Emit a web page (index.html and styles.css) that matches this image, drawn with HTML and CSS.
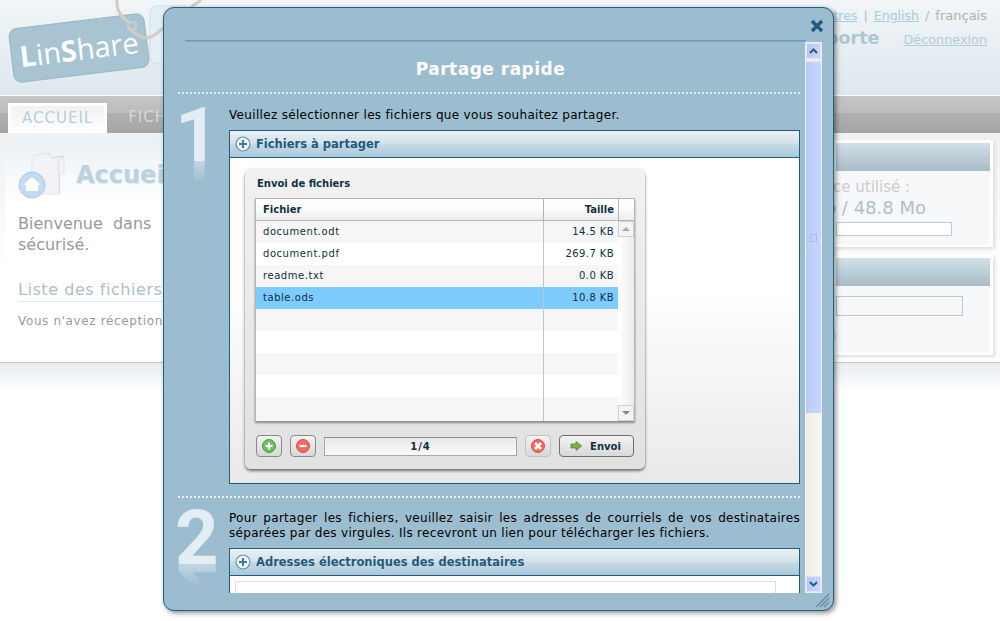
FILE: index.html
```html
<!DOCTYPE html>
<html lang="fr">
<head>
    <meta charset="utf-8" />
    <title>LinShare - Partage rapide</title>
    <link rel="stylesheet" href="styles.css">
</head>
<body>

<div class="page">
    <div class="header">
        <svg class="logo" width="215" height="95" viewBox="0 0 215 95">
            <rect x="150" y="6" width="40" height="58" rx="7" fill="#e4eef5" stroke="#cfdde6"/>
            <g transform="rotate(-7 79 48)">
                <rect x="11" y="21" width="136" height="54" rx="8" fill="#a8c4d2" stroke="#98b6c6"/>
                <text class="logo-text" x="19" y="60">L<tspan class="logo-thin">in</tspan>S<tspan class="logo-thin">hare</tspan></text>
            </g>
            <path d="M117 0 C116 10 122 18 130 23" fill="none" stroke="#cfcdc6" stroke-width="3"/>
            <path d="M128 27 C134 34 142 38 148 38 C156 36 160 30 168 24 L201 0" fill="none" stroke="#cfcdc6" stroke-width="3"/>
            <circle cx="132" cy="26" r="4" fill="none" stroke="#cfcdc6" stroke-width="2.5"/>
        </svg>
        <div class="header-right">
            <div class="header-links"><a href="#">tres</a> <span class="sep">|</span> <a href="#">English</a> <span class="sep">/</span> <span>français</span></div>
            <div class="header-user"><span class="user-name">porte</span><a href="#">Déconnexion</a></div>
        </div>
    </div>

    <div class="nav">
        <div class="tab tab-active">ACCUEIL</div>
        <div class="tab">FICH</div>
    </div>

    <div class="main">
        <div class="content">
            <div class="content-title">
                <svg width="52" height="50" viewBox="0 0 52 50">
                    <path d="M14 6 L30 3 L34 8 L46 6 L46 22 L42 24 L41 44 L14 44 Z" fill="#f3f2f6" stroke="#e4e3ea"/>
                    <path d="M30 3 L34 8 L46 6 L40 12 L42 44" fill="none" stroke="#dcdbe4"/>
                    <circle cx="14" cy="35" r="13" fill="#c4dcf2" stroke="#a9cbe8"/>
                    <path d="M5 35 L14 27 L23 35 L20 35 L20 41 L8 41 L8 35 Z" fill="#fff"/>
                </svg>
                <h1>Accuei</h1>
            </div>
            <p class="intro">Bienvenue dans<br />sécurisé.</p>
            <h2>Liste des fichiers</h2>
            <p class="note">Vous n'avez réception</p>
        </div>
        <div class="side">
            <div class="box box-usage">
                <div class="box-head"></div>
                <div class="usage-label">ce utilisé :</div>
                <div class="usage-value">o / 48.8 Mo</div>
                <div class="usage-bar"></div>
            </div>
            <div class="box box-search">
                <div class="box-head"></div>
                <div class="search-input"></div>
                <div class="search-btn"></div>
            </div>
        </div>
    </div>
    <div class="footer"></div>
</div>

<div class="modal">
    <svg class="modal-close" width="14" height="14" viewBox="0 0 14 14">
        <path d="M2 2 L12 12 M12 2 L2 12" stroke="#1f5c7f" stroke-width="3.4" fill="none"/>
    </svg>
    <div class="modal-rule"></div>
    <div class="modal-main">
        <div class="modal-scroll">
            <div class="modal-title">Partage rapide</div>

            <div class="step step-one">
                <div class="step-num">1</div>
                <div class="step-body">
                    <p class="step-text">Veuillez sélectionner les fichiers que vous souhaitez partager.</p>
                    <div class="panel">
                        <div class="panel-head">
                            <svg class="plus" width="16" height="16" viewBox="0 0 16 16">
                                <circle cx="8" cy="8" r="7" fill="#eef4f7" stroke="#5b93b0" stroke-width="1.2"/>
                                <path d="M8 4 V12 M4 8 H12" stroke="#3f7c9c" stroke-width="2"/>
                            </svg>
                            Fichiers à partager
                        </div>
                        <div class="panel-body">
                            <div class="uploader">
                                <div class="uploader-title">Envoi de fichiers</div>
                                <div class="grid">
                                    <div class="grid-head">
                                        <div class="col-name">Fichier</div>
                                        <div class="col-size">Taille</div>
                                        <div class="col-bar"></div>
                                    </div>
                                    <div class="grid-rows">
                                        <div class="rows">
                                            <div class="row"><div class="col-name">document.odt</div><div class="col-size">14.5 KB</div></div>
                                            <div class="row"><div class="col-name">document.pdf</div><div class="col-size">269.7 KB</div></div>
                                            <div class="row"><div class="col-name">readme.txt</div><div class="col-size">0.0 KB</div></div>
                                            <div class="row row-selected"><div class="col-name">table.ods</div><div class="col-size">10.8 KB</div></div>
                                            <div class="row"><div class="col-name"></div><div class="col-size"></div></div>
                                            <div class="row"><div class="col-name"></div><div class="col-size"></div></div>
                                            <div class="row"><div class="col-name"></div><div class="col-size"></div></div>
                                            <div class="row"><div class="col-name"></div><div class="col-size"></div></div>
                                            <div class="row row-last"><div class="col-name"></div><div class="col-size"></div></div>
                                        </div>
                                        <div class="grid-scroll">
                                            <div class="grid-arrow"><span class="tri-up"></span></div>
                                            <div class="grid-arrow"><span class="tri-down"></span></div>
                                        </div>
                                    </div>
                                </div>
                                <div class="tools">
                                    <div class="btn btn-icon">
                                        <svg width="16" height="16" viewBox="0 0 16 16">
                                            <circle cx="8" cy="8" r="6.5" fill="#6cc05c" stroke="#4b9a44"/>
                                            <path d="M8 4.5 V11.5 M4.5 8 H11.5" stroke="#fff" stroke-width="2.2"/>
                                        </svg>
                                    </div>
                                    <div class="btn btn-icon">
                                        <svg width="16" height="16" viewBox="0 0 16 16">
                                            <circle cx="8" cy="8" r="6.5" fill="#f26a62" stroke="#d94d48"/>
                                            <path d="M4.5 8 H11.5" stroke="#fff" stroke-width="2.2"/>
                                        </svg>
                                    </div>
                                    <div class="progress">1/4</div>
                                    <div class="btn btn-icon btn-pale">
                                        <svg width="16" height="16" viewBox="0 0 16 16">
                                            <circle cx="8" cy="8" r="6.5" fill="#f26a62" stroke="#d94d48"/>
                                            <path d="M5 5 L11 11 M11 5 L5 11" stroke="#fff" stroke-width="2.6"/>
                                        </svg>
                                    </div>
                                    <div class="btn btn-send">
                                        <svg width="12" height="10" viewBox="0 0 12 10">
                                            <path d="M1 3 H6 V0.5 L11.5 5 L6 9.5 V7 H1 Z" fill="#7fb23f" stroke="#55832a" stroke-width="0.8"/>
                                        </svg>
                                        Envoi
                                    </div>
                                </div>
                            </div>
                        </div>
                    </div>
                </div>
            </div>

            <div class="step step-two">
                <div class="step-num">2</div>
                <div class="step-body">
                    <p class="step-text step-justify">Pour partager les fichiers, veuillez saisir les adresses de courriels de vos destinataires séparées par des virgules. Ils recevront un lien pour télécharger les fichiers.</p>
                    <div class="panel">
                        <div class="panel-head">
                            <svg class="plus" width="16" height="16" viewBox="0 0 16 16">
                                <circle cx="8" cy="8" r="7" fill="#eef4f7" stroke="#5b93b0" stroke-width="1.2"/>
                                <path d="M8 4 V12 M4 8 H12" stroke="#3f7c9c" stroke-width="2"/>
                            </svg>
                            Adresses électroniques des destinataires
                        </div>
                        <div class="panel-body panel-body-mail">
                            <div class="mail-input"></div>
                        </div>
                    </div>
                </div>
            </div>
        </div>

        <div class="scrollbar">
            <div class="bar-btn"><svg width="9" height="6" viewBox="0 0 9 6"><path d="M1 5 L4.5 1.5 L8 5" fill="none" stroke="#2b5c80" stroke-width="2"/></svg></div>
            <div class="bar-thumb"><span class="bar-grip"></span></div>
            <div class="bar-track"></div>
            <div class="bar-btn"><svg width="9" height="6" viewBox="0 0 9 6"><path d="M1 1 L4.5 4.5 L8 1" fill="none" stroke="#2b5c80" stroke-width="2"/></svg></div>
        </div>
    </div>
    <svg class="modal-grip" width="15" height="15" viewBox="0 0 15 15">
        <path d="M14 1 L1 14 M14 5 L5 14 M14 9 L9 14" stroke="#5f8aa3" stroke-width="1.2" fill="none"/>
    </svg>
</div>

</body>
</html>
```

FILE: styles.css
```css
* { padding: 0; margin: 0; box-sizing: border-box; }

html, body { height: 100%; }
body { background: #fff; font-family: "DejaVu Sans", Verdana, sans-serif; font-size: 12px; color: #000; overflow: hidden; }

/* page behind the overlay */
.page { width: 1000px; }

.header { height: 96px; display: flex; justify-content: space-between; background: linear-gradient(#f2f5f7, #dde8ee); border-bottom: 1px solid #fff; }
.logo { display: block; }
.logo-text { font-family: "Open Sans", sans-serif; font-size: 29px; font-weight: bold; fill: #fff; }
.logo-thin { font-weight: normal; }
.header-right { width: 167px; padding-top: 8px; color: #b0b0b0; font-size: 13px; white-space: nowrap; }
.header-right a { color: #a4cbe0; font-size: 12.5px; }
.header-links { display: flex; justify-content: flex-end; align-items: baseline; gap: 6px; padding-right: 13px; }
.sep { color: #bbb; }
.header-user { display: flex; justify-content: flex-end; align-items: flex-end; padding: 3px 13px 0 0; height: 25px; }
.header-user a { color: #b3cbd8; margin-left: 24px; font-size: 12.8px; padding-bottom: 1px; }
.user-name { font-size: 17.5px; font-weight: bold; color: #aec6d2; }

.nav { height: 37px; padding: 7px 0 0 8px; display: flex; background: linear-gradient(#c5c5c5 0, #bcbcbc 45%, #b0b0b0 46%, #a5a5a5 100%); }
.tab { height: 30px; padding: 0 14px; line-height: 29px; margin-left: 7px; color: #d6d6d6; font-size: 15px; letter-spacing: 1px; }
.tab-active { margin-left: 0; padding: 0 11px; border: 3px solid #fff; border-bottom: 0; background: linear-gradient(#f1f1f1, #fff); color: #b7d0dd; line-height: 24px; }

.main { height: 230px; display: flex; background: linear-gradient(#f0f0f0, #fff 140px); padding: 5px 7px 0 5px; border-bottom: 1px solid #c8c8c8; }
.content { flex: 1; background: linear-gradient(#e9f0f4, #fff 62px); color: #999; padding-top: 12px; }
.content-title { display: flex; align-items: center; gap: 6px; padding-left: 13px; }
.content-title h1 { font-size: 24px; color: #bbd3df; text-shadow: 1px 1px 1px #e0e6ea; }
.intro { font-size: 16px; line-height: 21px; margin: 13px 0 0 13px; word-spacing: 5px; white-space: nowrap; }
.content h2 { width: 158px; font-size: 16px; font-weight: normal; letter-spacing: .55px; color: #a9bfca; margin: 25px 0 0 13px; padding-bottom: 2px; border-bottom: 1px solid #dfe8ee; white-space: nowrap; }
.note { margin: 12px 0 0 13px; font-size: 12px; letter-spacing: .63px; white-space: nowrap; }

.side { width: 160px; flex: none; }
.box { border: 3px solid #fff; background: #f6f8fa; box-shadow: 2px 2px 3px #ddd; margin-top: 2px; }
.box-head { height: 28px; background: linear-gradient(#d0e0e8, #a9bcc7); }
.box-usage { height: 107px; }
.box-search { height: 100px; margin-top: 8px; }
.usage-label { margin-left: -30px; text-align: right; padding: 7px 80px 0 0; white-space: nowrap; font-size: 15px; color: #ccc; }
.usage-value { margin-left: -30px; text-align: right; padding: 1px 64px 0 0; white-space: nowrap; font-size: 18px; line-height: 22px; color: #aebfcb; }
.usage-bar { width: 116px; height: 14px; margin-top: 3px; background: #fff; border: 1px solid #b8cfdb; }
.search-input { width: 127px; height: 20px; margin-top: 10px; background: #f8f8f8; border: 1px solid #b3c9d5; }
.search-btn { width: 18px; height: 18px; margin: 10px 0 0 -18px; border: 1px solid #d5dde2; border-radius: 50%; }

.footer { height: 27px; background: linear-gradient(#e8edf0, #fff); }

/* modal window, sits over the page */
.modal { position: absolute; left: 163px; top: 7px; width: 671px; height: 604px; background: #9cbccf; border: 1px solid #22607f; border-radius: 11px; box-shadow: 2px 2px 5px rgba(0,0,0,.45); display: flex; flex-direction: column; padding: 32px 11px 17px 10px; }
.modal-close { position: absolute; right: 9px; top: 11px; }
.modal-grip { position: absolute; right: 3px; bottom: 2px; }
.modal-rule { height: 1px; flex: none; margin: 0 16px 0 11px; background: #6a9dba; box-shadow: 0 1px 0 #7fa9c2; }
.modal-main { flex: 1; display: flex; min-height: 0; gap: 5px; padding-top: 1px; }
.modal-scroll { width: 627px; padding-left: 4px; overflow: hidden; }
.modal-title { height: 50px; padding: 17px 0 0 3px; text-align: center; font-size: 17px; font-weight: bold; letter-spacing: .5px; color: #fff; }

.step { display: flex; border-top: 2px dotted #e6eef3; padding-top: 14px; }
.step-two { margin-top: 12px; padding-top: 13px; }
.step-num { width: 51px; height: 54px; flex: none; text-indent: -3px; font-family: Roboto, sans-serif; font-size: 76px; font-weight: bold; line-height: 54px; color: #e3edf3; -webkit-box-reflect: below -2px linear-gradient(transparent 55%, rgba(255,255,255,.55)); }
.step-body { flex: 1; min-width: 0; }
.step-text { font-size: 12px; line-height: 15px; letter-spacing: .32px; margin-bottom: 7px; }
.step-justify { text-align: justify; letter-spacing: .3px; }

.panel { border: 1px solid #1f5c7f; background: #fff; }
.panel-head { height: 27px; display: flex; align-items: center; gap: 5px; padding-left: 5px; font-weight: bold; font-size: 11.5px; color: #1f5c7f; background: linear-gradient(#eaf1f4, #d4e2e9 48%, #c7dbe5 50%, #a9c9da); border-bottom: 1px solid #1f5c7f; }
.panel-body { height: 325px; padding: 11px 0 0 15px; background: linear-gradient(#fff 40%, #e9e9e9); }
.panel-body-mail { height: 120px; padding: 5px 0 0 5px; background: #fff; }
.mail-input { width: 541px; height: 60px; border: 1px solid #ddd; }

/* upload widget */
.uploader { width: 400px; height: 300px; border-radius: 6px; padding: 7px 10px 0 10px; background: linear-gradient(#f1f1f1, #e1e1e1); box-shadow: 0 2px 3px rgba(0,0,0,.5), 0 0 3px rgba(0,0,0,.12); }
.uploader-title { height: 22px; padding: 1px 0 0 2px; font-size: 10px; font-weight: bold; color: #0f3140; line-height: 14px; }
.grid { width: 380px; border: 1px solid #b5b5b5; border-bottom: 0; background: #fff; box-shadow: 0 2px 2px rgba(0,0,0,.4); font-size: 10px; color: #0f3140; }
.grid-head { display: flex; height: 22px; line-height: 21px; font-weight: bold; background: linear-gradient(#fff, #fff 30%, #ececec); border-bottom: 1px solid #b5b5b5; }
.grid-head .col-bar { width: 16px; border-left: 1px solid #b5b5b5; }
.grid-rows { display: flex; }
.rows { width: 362px; }
.row { display: flex; height: 22px; line-height: 21px; background: #fff; }
.row:nth-child(odd) { background: #f6f6f6; }
.row-last { height: 24px; }
.row-selected, .row-selected:nth-child(odd), .row-selected:nth-child(even) { background: #7ecbff; }
.col-name { width: 287px; padding-left: 7px; letter-spacing: .55px; }
.grid-head .col-name { letter-spacing: 0; }
.col-size { width: 75px; border-left: 1px solid #c4c4c4; padding-right: 4px; text-align: right; letter-spacing: .4px; }
.grid-head .col-size { letter-spacing: 0; border-left-color: #b5b5b5; }
.grid-scroll { width: 16px; flex: 1; display: flex; flex-direction: column; justify-content: space-between; background: linear-gradient(to right, #fff, #ececec); }
.grid-arrow { height: 16px; background: #f4f4f4; border: 1px solid #d0d0d0; display: flex; align-items: center; justify-content: center; }
.tri-up { border: 4px solid transparent; border-top: 0; border-bottom: 4px solid #aaa; }
.tri-down { border: 4px solid transparent; border-bottom: 0; border-top: 4px solid #888; }

.tools { display: flex; align-items: center; margin-top: 14px; padding-left: 1px; }
.btn { height: 22px; border: 1px solid #8a8a8a; border-radius: 4px; background: linear-gradient(#f3f3f3, #d8d8d8); display: flex; align-items: center; justify-content: center; }
.btn-icon { width: 26px; margin-right: 8px; }
.btn-pale { border-color: #c2c2c2; }
.progress { width: 193px; height: 19px; margin-right: 8px; border: 1px solid #a8a8a8; border-top-color: #8c8c8c; background: linear-gradient(#e9e9e9, #fafafa); text-align: center; font-size: 10px; font-weight: bold; letter-spacing: 1px; line-height: 18px; color: #0f3140; }
.btn-send { width: 75px; gap: 8px; padding-right: 2px; border-color: #6f6f6f; font-size: 10px; font-weight: bold; color: #0f3140; }

/* fake scrollbar of the window */
.scrollbar { width: 17px; flex: none; display: flex; flex-direction: column; padding: 1px; background: #f1eee8; }
.bar-btn { height: 16px; flex: none; background: linear-gradient(to right, #b4c9f5, #c9d7fb); border: 1px solid #dfe5f5; display: flex; align-items: center; justify-content: center; }
.bar-thumb { height: 352px; margin-top: 2px; background: linear-gradient(to right, #b9cdf9, #c6d6fd); border-top: 1px solid #dfe5f5; display: flex; align-items: center; justify-content: center; flex: none; }
.bar-grip { width: 7px; height: 8px; border: 1px solid #aabde8; }
.bar-track { flex: 1; background: linear-gradient(to right, #f0ede6, #f8f7f3); }
```
